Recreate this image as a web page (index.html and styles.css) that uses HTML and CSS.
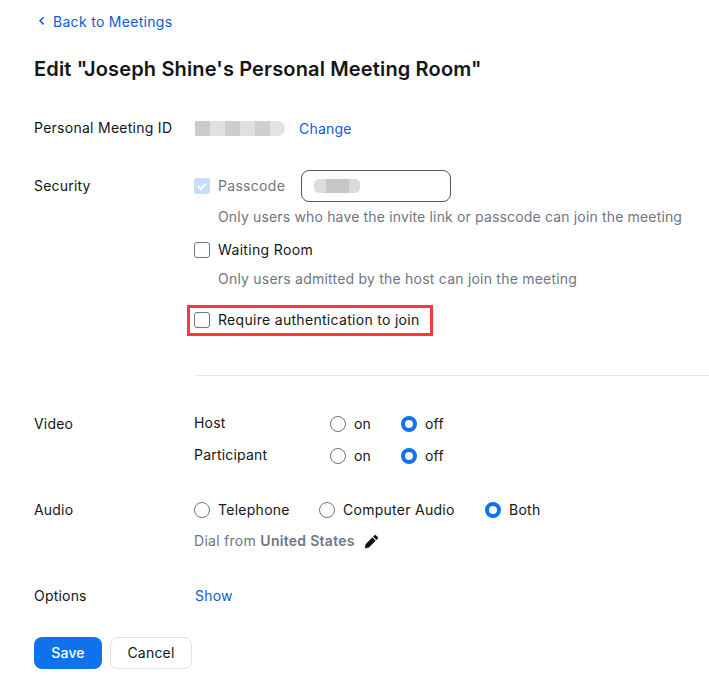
FILE: index.html
```html
<!DOCTYPE html>
<html lang="en">
<head>
<meta charset="utf-8">
<title>Edit Personal Meeting Room</title>
<link rel="stylesheet" href="styles.css">
</head>
<body>
<main class="page">
  <a class="back" href="#">
    <svg class="chev" width="8" height="10" viewBox="0 0 8 10"><path d="M5.6 1.2 2 4.8l3.6 3.6" fill="none" stroke="#0b5cd6" stroke-width="1.5"/></svg>
    Back to Meetings
  </a>
  <h1 class="title">Edit "Joseph Shine's Personal Meeting Room"</h1>

  <section class="row row-pmi">
    <div class="label">Personal Meeting ID</div>
    <div class="pmi">
      <span class="blur blur-id"><i class="b1"></i><i class="b2"></i><i class="b3"></i><i class="b4"></i><i class="b5"></i><i class="b6"></i></span>
      <a class="link" href="#">Change</a>
    </div>
  </section>

  <section class="row row-security">
    <div class="label">Security</div>
    <div class="col">
      <div class="line line-pass">
        <span class="box box-on"><svg width="16" height="16" viewBox="0 0 16 16"><path d="M4 8.2l2.8 2.8L12 5.4" fill="none" stroke="#fff" stroke-width="2"/></svg></span>
        <span class="muted-label">Passcode</span>
        <span class="input"><span class="blur blur-pass"><i class="p1"></i><i class="p2"></i><i class="p3"></i><i class="p4"></i></span></span>
      </div>
      <p class="hint hint-pass">Only users who have the invite link or passcode can join the meeting</p>
      <div class="line line-wait"><span class="box"></span><span class="wait-text">Waiting Room</span></div>
      <p class="hint hint-wait">Only users admitted by the host can join the meeting</p>
      <div class="highlight"><span class="box"></span><span>Require authentication to join</span></div>
    </div>
  </section>

  <hr class="divider">

  <section class="row row-video">
    <div class="label">Video</div>
    <div class="col">
      <div class="vline">
        <span class="vname">Host</span>
        <span class="opt opt-on"><span class="radio"></span>on</span>
        <span class="opt"><span class="radio radio-on"></span>off</span>
      </div>
      <div class="vline vline-2">
        <span class="vname">Participant</span>
        <span class="opt opt-on"><span class="radio"></span>on</span>
        <span class="opt"><span class="radio radio-on"></span>off</span>
      </div>
    </div>
  </section>

  <section class="row row-audio">
    <div class="label">Audio</div>
    <div class="col">
      <div class="aline">
        <span class="opt opt-tel"><span class="radio"></span>Telephone</span>
        <span class="opt opt-comp"><span class="radio"></span>Computer Audio</span>
        <span class="opt"><span class="radio radio-on"></span>Both</span>
      </div>
      <div class="dial"><span>Dial from <b>United States</b></span>
        <svg class="pencil" width="15" height="15" viewBox="0 0 16 16"><path d="M11.2 1.2a1 1 0 0 1 1.4 0l2.2 2.2a1 1 0 0 1 0 1.4l-1.5 1.5-3.6-3.6zM8.9 3.5l3.6 3.6-7.3 7.3-4.4 1 .9-4.5z" fill="#111"/></svg>
      </div>
    </div>
  </section>

  <section class="row row-options">
    <div class="label">Options</div>
    <a class="link link-show" href="#">Show</a>
  </section>

  <div class="actions">
    <button class="btn btn-primary" type="button">Save</button>
    <button class="btn btn-default" type="button">Cancel</button>
  </div>
</main>
</body>
</html>
```

FILE: styles.css
```css
* { box-sizing: border-box; }
html, body { margin: 0; padding: 0; background: #fff; }
body { font-family: Inter, "Liberation Sans", sans-serif; font-size: 14px; line-height: 20px; letter-spacing: 0.2px; color: #131619; overflow: hidden; }
.page { height: 688px; padding: 12px 0 0 34px; }
a { color: #0b5cd6; text-decoration: none; }
.back { display: flex; align-items: center; gap: 7px; padding-left: 4px; height: 20px; letter-spacing: 0.3px; }
.chev { margin-top: -2px; }
.title { margin: 21px 0 0; font-size: 20px; line-height: 32px; font-weight: 600; letter-spacing: 0.15px; color: #131619; }
.row { display: flex; }
.label { width: 160px; flex: none; }
.row-pmi { margin-top: 33px; height: 20px; }
.row-pmi .label { letter-spacing: 0.27px; }
.pmi { display: flex; align-items: center; }
.pmi .link { margin-left: 14px; position: relative; top: 1px; }
.blur { display: flex; height: 15px; }
.blur i { display: block; width: 15px; height: 100%; }
.blur .b1 { background: #cbcacf; }
.blur .b2 { background: #e2e0e2; }
.blur .b3 { background: #cdccd0; }
.blur .b4 { background: #dfdfe4; }
.blur .b5 { background: #d0ced2; }
.blur .b6 { background: #e3e2e6; border-radius: 0 8px 8px 0; }
.blur-id { margin-left: 1px; }
.row-security { margin-top: 38px; }
.col { flex: 1; min-width: 0; }
.line { display: flex; align-items: center; }
.box { flex: none; width: 16px; height: 16px; margin-right: 8px; border: 1px solid #6e7680; border-radius: 3px; background: #fff; display: block; }
.box-on { border: 0; background: #c6dcfb; }
.box-on svg { display: block; }
.muted-label { color: #6e7685; letter-spacing: 0.3px; }
.input { width: 150px; height: 32px; margin-left: 16px; border: 1px solid #525960; border-radius: 8px; display: flex; align-items: center; padding-left: 12px; }
.blur-pass { width: 46px; height: 14px; border-radius: 5px; overflow: hidden; }
.blur-pass i { width: 12px; }
.blur .p1 { background: #dcdcdc; }
.blur .p2 { background: #c6c6c8; }
.blur .p3 { background: #c6c6c8; }
.blur .p4 { background: #dadada; }
.line-pass { height: 32px; margin-top: -6px; }
.hint { margin: 0 0 0 24px; color: #6e7685; letter-spacing: 0.16px; }
.hint-pass { margin-top: 5px; }
.line-wait { margin-top: 13px; }
.wait-text { letter-spacing: 0.34px; }
.hint-wait { margin-top: 9px; letter-spacing: 0.22px; }
.highlight { display: flex; align-items: center; width: 246px; height: 31px; margin: 16px 0 0 -7px; padding: 0 0 1px 4px; border: 3px solid #f53a3d; letter-spacing: 0.3px; }
.divider { height: 1px; margin: 39px 0 0 160px; border: 0; background: #e9eaec; }
.row-video { margin-top: 38px; }
.vline { display: flex; align-items: center; }
.vline-2 { margin-top: 12px; }
.vname { width: 136px; position: relative; top: -1px; }
.opt { display: flex; align-items: center; }
.opt-on { width: 71px; }
.radio { flex: none; width: 16px; height: 16px; margin-right: 8px; border: 1px solid #6e7680; border-radius: 50%; background: #fff; }
.radio-on { border: 4px solid #0e72ed; }
.row-audio { margin-top: 34px; }
.aline { display: flex; letter-spacing: 0.27px; }
.opt-tel { width: 125px; }
.opt-comp { width: 166px; }
.dial { margin-top: 11px; display: flex; align-items: center; color: #6e7685; letter-spacing: 0.28px; }
.dial b { font-weight: 600; }
.pencil { margin-left: 9px; }
.row-options { margin-top: 35px; }
.link-show { margin-left: 1px; }
.actions { display: flex; gap: 8px; margin-top: 31px; }
.btn { height: 32px; border-radius: 8px; font: 500 14px/20px Inter, "Liberation Sans", sans-serif; letter-spacing: 0.2px; padding: 0; cursor: pointer; }
.btn-primary { width: 68px; background: #0e72ed; color: #fff; border: 0; }
.btn-default { width: 82px; background: #fff; color: #131619; border: 1px solid #dfe1e6; font-weight: 400; }
```
